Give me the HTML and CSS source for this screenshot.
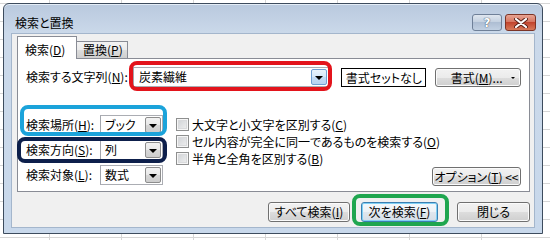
FILE: index.html
```html
<!DOCTYPE html>
<html lang="ja">
<head>
<meta charset="utf-8">
<title>検索と置換</title>
<link rel="stylesheet" href="styles.css">
</head>
<body>
<div class="window">
  <div class="titlebar">
    <span class="title">検索と置換</span>
    <div class="caption">
      <span class="cbtn help">?</span>
      <span class="cbtn close"><svg width="14" height="10" viewBox="0 0 14 10"><path d="M2 1 L12 9 M12 1 L2 9" stroke="#5a2016" stroke-width="4" stroke-linecap="round"/><path d="M2 1 L12 9 M12 1 L2 9" stroke="#fff" stroke-width="2.2" stroke-linecap="round"/></svg></span>
    </div>
  </div>
  <div class="client">
    <div class="tabs">
      <div class="tab active">検索(<u>D</u>)</div>
      <div class="tab">置換(<u>P</u>)</div>
    </div>
    <div class="panel">
      <div class="row1">
        <span class="lbl find-lbl">検索する文字列(<u>N</u>):</span>
        <div class="combo wide hl hl-red">
          <span class="combo-text">炭素繊維</span>
          <span class="drop drop-hot"><i class="arrow"></i></span>
        </div>
        <div class="preview">書式セットなし</div>
        <div class="btn fmt-btn"><span class="btn-txt">書式(<u>M</u>)...</span><i class="arrow small"></i></div>
      </div>
      <div class="row2">
        <div class="selects">
          <div class="sel-row hl hl-cyan">
            <span class="lbl sel-lbl">検索場所(<u>H</u>):</span>
            <div class="combo narrow"><span class="combo-text">ブック</span><span class="drop"><i class="arrow"></i></span></div>
          </div>
          <div class="sel-row hl hl-navy">
            <span class="lbl sel-lbl">検索方向(<u>S</u>):</span>
            <div class="combo narrow"><span class="combo-text">列</span><span class="drop"><i class="arrow"></i></span></div>
          </div>
          <div class="sel-row">
            <span class="lbl sel-lbl">検索対象(<u>L</u>):</span>
            <div class="combo narrow"><span class="combo-text">数式</span><span class="drop"><i class="arrow"></i></span></div>
          </div>
        </div>
        <div class="right-col">
          <div class="checks">
            <div class="check-row"><span class="cb"></span><span>大文字と小文字を区別する(<u>C</u>)</span></div>
            <div class="check-row"><span class="cb"></span><span>セル内容が完全に同一であるものを検索する(<u>O</u>)</span></div>
            <div class="check-row"><span class="cb"></span><span>半角と全角を区別する(<u>B</u>)</span></div>
          </div>
          <div class="btn opt-btn">オプション(<u>T</u>) &lt;&lt;</div>
        </div>
      </div>
    </div>
    <div class="actions">
      <div class="btn all-btn">すべて検索(<u>I</u>)</div>
      <div class="btn next-btn default hl hl-green">次を検索(<u>F</u>)</div>
      <div class="btn close-btn">閉じる</div>
    </div>
  </div>
</div>
</body>
</html>
```

FILE: styles.css
```css
* { box-sizing: border-box; }
html, body { margin: 0; }
body {
  width: 550px;
  height: 240px;
  overflow: hidden;
  padding: 3px 0 0 3px;
  font-family: "Noto Sans CJK JP", "Noto Sans", sans-serif;
  font-size: 12px;
  line-height: 16px;
  font-feature-settings: "palt" 1;
  white-space: nowrap;
  color: #000;
  background-color: #fff;
  background-image:
    linear-gradient(to right, #d6d6d6 1px, transparent 1px),
    linear-gradient(to bottom, #d6d6d6 1px, transparent 1px);
  background-size: 72px 18px;
  background-position: 49px 3px;
}
u { text-decoration: underline; text-underline-offset: 1px; }

.window {
  width: 540px;
  height: 231px;
  border: 1px solid #3d4c5e;
  border-radius: 6px 6px 0 0;
  background: linear-gradient(#b9c9de 0px, #cbd9ea 30px, #c8d8eb 100%);
  display: flex;
  flex-direction: column;
  box-shadow: inset 0 1px 0 #e4edf7;
}
.titlebar {
  height: 29px;
  padding: 8px 6px 0 11px;
  display: flex;
  align-items: center;
  justify-content: space-between;
}
.title { font-size: 12px; }
.caption { display: flex; gap: 3px; }
.cbtn {
  height: 17px;
  border-radius: 3px;
  display: flex;
  align-items: center;
  justify-content: center;
}
.help {
  width: 30px;
  border: 1px solid #6f8098;
  background: linear-gradient(#dfe6ef, #c2cfdf 50%, #aebed3 50%, #c1d0e2);
  color: #fff;
  font-weight: bold;
  font-family: "DejaVu Sans", sans-serif;
  font-size: 12px;
  text-shadow: 0 0 1px #3c4c62, 0 0 1px #3c4c62;
}
.close {
  width: 31px;
  border: 1px solid #7c3426;
  background: linear-gradient(#e8a493, #d4725d 50%, #c2452e 50%, #d77a5a);
}

.client {
  margin: 0 7px;
  height: 195px;
  border: 1px solid #a4b6cc;
  background: #f0f0f0;
  padding: 2px 4px 0 5px;
}

.tabs {
  display: flex;
  align-items: flex-end;
  height: 23px;
  margin-bottom: -1px;
  position: relative;
  z-index: 1;
}
.tab {
  height: 17px;
  width: 51px;
  margin-bottom: 1px;
  border: 1px solid #898c95;
  border-bottom: none;
  border-left: none;
  background: linear-gradient(#f3f3f3, #ebebeb 50%, #dddddd 50%, #cfcfcf);
  padding-left: 6px;
  line-height: 16px;
}
.tab.active {
  height: 23px;
  width: 60px;
  margin-bottom: 0;
  border-left: 1px solid #898c95;
  background: #fff;
  padding: 5px 0 0 7px;
}

.panel {
  width: 513px;
  height: 134px;
  border: 1px solid #898c95;
  background: #fff;
  padding: 8px 8px 0 8px;
}

.row1 {
  display: flex;
  align-items: center;
  height: 20px;
}
.find-lbl { flex: 0 0 107px; }

.combo {
  height: 20px;
  border: 1px solid #abadb3;
  border-left-color: #a3a6ad;
  background: #fff;
  display: flex;
  align-items: center;
  justify-content: space-between;
  padding: 1px;
}
.combo.wide { width: 197px; }
.combo.narrow { width: 63px; }
.combo-text { padding-left: 3px; }
.combo.wide .combo-text { padding-left: 4px; }
.drop {
  flex: 0 0 16px;
  height: 16px;
  border: 1px solid #8d8d8d;
  border-radius: 2px;
  background: linear-gradient(#f2f2f2, #e8e8e8 50%, #d7d7d7 50%, #cdcdcd);
  display: flex;
  align-items: center;
  justify-content: center;
}
.drop-hot {
  border-color: #6f9fd3;
  background: linear-gradient(#e9f3fd, #d6e8fa 50%, #c4dcf6 50%, #b7d3f2);
}
.arrow {
  width: 0;
  height: 0;
  border-left: 4px solid transparent;
  border-right: 4px solid transparent;
  border-top: 4px solid #000;
  margin-top: 1px;
}
.arrow.small {
  border-left-width: 2px;
  border-right-width: 2px;
  border-top-width: 2px;
}

.preview {
  margin-left: 12px;
  width: 85px;
  height: 19px;
  border: 1px solid #000;
  background: #fff;
  text-align: center;
  line-height: 17px;
}

.btn {
  height: 19px;
  border: 1px solid #707070;
  border-radius: 3px;
  background: linear-gradient(#f2f2f2, #ebebeb 50%, #dddddd 50%, #cfcfcf);
  box-shadow: inset 0 0 0 1px #fbfbfb;
  text-align: center;
  line-height: 17px;
}
.fmt-btn {
  margin-left: 9px;
  width: 86px;
  display: flex;
  align-items: center;
  padding: 0 5px 0 6px;
}
.btn-txt { flex: 1; text-align: center; }

.row2 {
  display: flex;
  margin-top: 28px;
}
.selects {
  display: flex;
  flex-direction: column;
  gap: 5px;
}
.sel-row {
  display: flex;
  align-items: center;
  height: 20px;
}
.sel-lbl { flex: 0 0 74px; }

.right-col {
  flex: 1;
  margin-left: 13px;
  display: flex;
  flex-direction: column;
}
.checks { padding-top: 1px; }
.check-row {
  display: flex;
  align-items: center;
  gap: 3px;
  height: 17px;
}
.cb {
  width: 13px;
  height: 13px;
  border: 1px solid #8e8f8f;
  background: linear-gradient(135deg, #cdd0d4, #f2f2f2);
  box-shadow: inset 0 0 0 1px #f6f6f6, inset 0 0 0 2px #d9dadc;
}
.opt-btn {
  margin-top: auto;
  margin-bottom: 1px;
  align-self: flex-end;
  width: 89px;
}

.actions {
  display: flex;
  justify-content: flex-end;
  margin-top: 10px;
  padding-right: 0;
}
.actions .btn { height: 20px; line-height: 18px; }
.all-btn { width: 82px; }
.next-btn { width: 77px; margin-left: 11px; }
.close-btn { width: 73px; margin-left: 19px; }
.btn.default {
  border-color: #3c7fb1;
  box-shadow: inset 0 0 0 1px #7fd0f5;
  background: linear-gradient(#f4f8fb, #edf2f6 50%, #e0e7ee 50%, #d6dee7);
}

/* annotation frames drawn over the dialog */
.hl { position: relative; }
.hl::after {
  content: "";
  position: absolute;
  border-width: 4px;
  border-style: solid;
  border-radius: 8px;
  pointer-events: none;
}
.hl-red::after { top: -7px; left: -5px; right: -4px; bottom: -5px; border-color: #e3141c; }
.hl-cyan::after { top: -10px; left: -6px; right: -4px; bottom: -1px; border-color: #1ba3da; }
.hl-navy::after { top: -3px; left: -9px; right: -4px; bottom: -3px; border-color: #0d1f4b; }
.hl-green::after { top: -9px; left: -10px; right: -12px; bottom: -5px; border-color: #1fa64f; }
```
